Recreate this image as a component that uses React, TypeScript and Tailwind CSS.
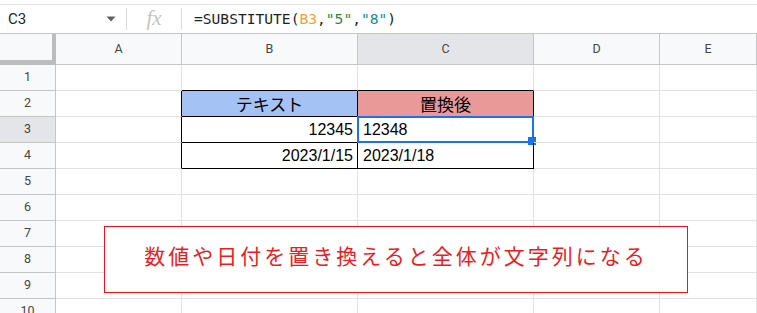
import React from 'react';

const cols = ['A', 'B', 'C', 'D', 'E'];
const rows = [1, 2, 3, 4, 5, 6, 7, 8, 9, 10];

type Cell = { text: string; align: 'left' | 'right' | 'center'; bg?: string; jp?: boolean };

const data: Record<string, Cell> = {
  B2: { text: 'テキスト', align: 'center', bg: 'bg-[#a4c2f4]', jp: true },
  C2: { text: '置換後', align: 'center', bg: 'bg-[#ea9999]', jp: true },
  B3: { text: '12345', align: 'right' },
  C3: { text: '12348', align: 'left' },
  B4: { text: '2023/1/15', align: 'right' },
  C4: { text: '2023/1/18', align: 'left' },
};

const inTable = (c: string, r: number) => (c === 'B' || c === 'C') && r >= 2 && r <= 4;

const cellBorder = (c: string, r: number) => {
  if (inTable(c, r)) return 'border-r border-b border-black';
  if (c === 'A' && r >= 2 && r <= 4) return 'border-r border-b border-r-black border-b-[#e2e2e2]';
  if ((c === 'B' || c === 'C') && r === 1) return 'border-r border-b border-r-[#e2e2e2] border-b-black';
  return 'border-r border-b border-[#e2e2e2]';
};

const alignClass = { left: 'justify-start pl-[5px]', right: 'justify-end pr-[4px]', center: 'justify-center' };

const FormulaBar = () => (
  <div className="pt-[4px] bg-white">
    <div className="h-[30px] border-t border-b border-t-[#e3e3e3] border-b-[#c4c7c5] flex items-center">
      <div className="w-[127px] flex items-center justify-between pl-[8px] pr-[10px] border-r border-[#dadce0] h-[22px]">
        <span className="text-[15px] text-[#1f1f1f]" style={{ fontFamily: 'Roboto, sans-serif' }}>
          C3
        </span>
        <svg width="10" height="6" viewBox="0 0 10 6">
          <path d="M0.5 0.5h9L5 5.5z" fill="#5f6368" />
        </svg>
      </div>
      <div className="w-[55px] h-[22px] flex items-center justify-center border-r border-[#dadce0]">
        <span
          className="italic text-[21px] text-[#c4c4c4] leading-none -mt-[2px]"
          style={{ fontFamily: '"Liberation Serif", serif' }}
        >
          fx
        </span>
      </div>
      <div
        className="pl-[12px] text-[14.6px] text-[#1f1f1f] whitespace-pre"
        style={{ fontFamily: '"DejaVu Sans Mono", monospace' }}
      >
        =SUBSTITUTE(<span className="text-[#f7a033]">B3</span>,<span className="text-[#1e8e3e]">"5"</span>,
        <span className="text-[#12908e]">"8"</span>)
      </div>
    </div>
  </div>
);

export default function App() {
  return (
    <div className="w-[757px] h-[313px] overflow-hidden bg-white">
      <FormulaBar />
      <div className="relative">
        <div
          className="grid grid-cols-[56px_126px_176px_176px_126px_1fr] grid-rows-[31px_repeat(10,26px)]"
          style={{ fontFamily: '"Liberation Sans", Arial, sans-serif' }}
        >
          <div className="bg-[#f8f9fa] border-r-[4px] border-b-[5px] border-[#bdbdbd]" />
          {cols.map((c) => (
            <div
              key={c}
              className={`flex items-center justify-center text-[12.5px] text-[#444746] border-r border-b border-[#c4c7c5] ${
                c === 'C' ? 'bg-[#e3e5e8]' : 'bg-[#f8f9fa]'
              }`}
              style={{ fontFamily: 'Roboto, sans-serif' }}
            >
              {c}
            </div>
          ))}
          {rows.map((r) => (
            <React.Fragment key={r}>
              <div
                className={`flex items-center justify-center text-[12.5px] text-[#444746] border-r border-b border-[#c4c7c5] ${
                  r === 3 ? 'bg-[#e3e5e8]' : 'bg-[#f8f9fa]'
                }`}
                style={{ fontFamily: 'Roboto, sans-serif' }}
              >
                {r}
              </div>
              {cols.map((c) => {
                const cell = data[`${c}${r}`];
                return (
                  <div
                    key={c}
                    className={`relative flex items-center text-[16px] text-black ${cellBorder(c, r)} ${
                      cell?.bg ?? ''
                    } ${cell ? alignClass[cell.align] : ''}`}
                    style={
                      cell?.jp ? { fontFamily: '"Noto Sans CJK JP", sans-serif', fontSize: '17px' } : undefined
                    }
                  >
                    {cell?.text}
                    {c === 'C' && r === 3 && (
                      <>
                        <div className="absolute -left-[1px] -top-[1px] -right-[1px] -bottom-[1px] border-2 border-[#1a73e8]" />
                        <div className="absolute -right-[3px] -bottom-[3px] w-[8px] h-[8px] bg-[#1a73e8]" />
                      </>
                    )}
                  </div>
                );
              })}
            </React.Fragment>
          ))}
        </div>
        <div className="absolute left-[104px] top-[192px] w-[584px] h-[67px] border border-[#e8141b] bg-white flex items-center justify-center pb-[8px]">
          <span
            className="text-[21px] text-[#ea1c24] tracking-[3px]"
            style={{ fontFamily: '"Noto Sans CJK JP", sans-serif' }}
          >
            数値や日付を置き換えると全体が文字列になる
          </span>
        </div>
      </div>
    </div>
  );
}
